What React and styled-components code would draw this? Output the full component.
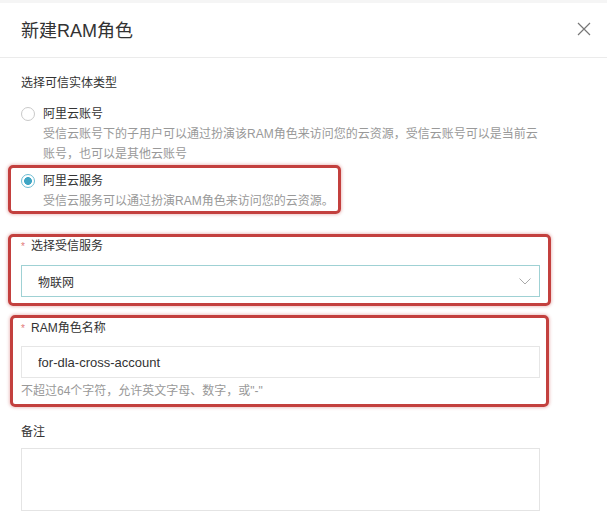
import React from 'react'
import styled, { createGlobalStyle } from 'styled-components'

const GlobalStyle = createGlobalStyle`
  html, body {
    margin: 0;
    padding: 0;
    background: #fff;
  }
  body {
    font-family: 'Liberation Sans', 'Noto Sans CJK SC', sans-serif;
    color: #333;
  }
`

export default function App() {
  return (
    <Dialog>
      <GlobalStyle />
      <Header>
        <Title>新建RAM角色</Title>
        <CloseButton aria-label="close">
          <svg width="14" height="14" viewBox="0 0 14 14">
            <path d="M1 1L13 13M13 1L1 13" stroke="#777" strokeWidth="1.2" fill="none" />
          </svg>
        </CloseButton>
      </Header>

      <Body>
        <SectionLabel>选择可信实体类型</SectionLabel>

        <Option>
          <Radio />
          <OptionText>
            <OptionTitle>阿里云账号</OptionTitle>
            <OptionDesc>
              受信云账号下的子用户可以通过扮演该RAM角色来访问您的云资源，受信云账号可以是当前云账号，也可以是其他云账号
            </OptionDesc>
          </OptionText>
        </Option>

        <OptionMark>
          <Option>
            <Radio checked />
            <OptionText>
              <OptionTitle>阿里云服务</OptionTitle>
              <OptionDesc>受信云服务可以通过扮演RAM角色来访问您的云资源。</OptionDesc>
            </OptionText>
          </Option>
        </OptionMark>

        <ServiceMark>
          <FieldLabel>
            <Required>*</Required>选择受信服务
          </FieldLabel>
          <Select>
            <span>物联网</span>
            <svg width="12" height="7" viewBox="0 0 12 7">
              <path d="M0.5 0.5L6 6L11.5 0.5" stroke="#aaa" strokeWidth="1" fill="none" />
            </svg>
          </Select>
        </ServiceMark>

        <NameMark>
          <FieldLabel>
            <Required>*</Required>RAM角色名称
          </FieldLabel>
          <TextInput readOnly value="for-dla-cross-account" />
          <Hint>不超过64个字符，允许英文字母、数字，或"-"</Hint>
        </NameMark>

        <NoteLabel>备注</NoteLabel>
        <NoteArea readOnly value="" />
      </Body>
    </Dialog>
  )
}

const Dialog = styled.div`
  width: 607px;
  height: 518px;
  overflow: hidden;
  background: #fff;
`

const Header = styled.div`
  box-sizing: border-box;
  height: 58px;
  display: flex;
  align-items: center;
  justify-content: space-between;
  padding: 0 16px 3px 21px;
  border-top: 3px solid #f5f5f5;
  border-bottom: 1px solid #ebebeb;
`

const Title = styled.div`
  font-size: 18px;
  color: #333;
`

const CloseButton = styled.div`
  width: 14px;
  height: 14px;
  display: flex;
`

const Body = styled.div`
  padding: 0 67px 0 21px;
  font-size: 12px;
`

const SectionLabel = styled.div`
  margin-top: 15px;
  line-height: 20px;
  color: #333;
`

const Option = styled.div`
  display: flex;
  align-items: flex-start;
  gap: 8px;
  margin-top: 11px;
`

const Radio = styled.span`
  box-sizing: border-box;
  flex: none;
  width: 14px;
  height: 14px;
  margin-top: 3px;
  border-radius: 50%;
  border: 1px solid ${(p) => (p.checked ? '#6dbdd3' : '#c9c9c9')};
  background: ${(p) =>
    p.checked ? 'radial-gradient(circle, #3fa5c4 0 3.6px, #fff 4.2px)' : '#fff'};
`

const OptionText = styled.div`
  max-width: 497px;
`

const OptionTitle = styled.div`
  line-height: 20px;
  color: #333;
`

const OptionDesc = styled.div`
  line-height: 20px;
  color: #999;
`

const Mark = styled.div`
  border: 3px solid #c3403e;
  border-radius: 5px;
  box-shadow: 0 0 3px 1px rgba(195, 64, 62, 0.3);
`

const OptionMark = styled(Mark)`
  width: fit-content;
  margin: 1px 0 0 -13px;
  padding: 3px 4px 0 10px;

  ${Option} {
    margin-top: 0;
  }
`

const ServiceMark = styled(Mark)`
  margin: 20px -11px 0 -13px;
  padding: 0 8px 6px 10px;
`

const NameMark = styled(Mark)`
  margin: 9px -9px 0 -11px;
  padding: 1px 6px 4px 8px;
`

const FieldLabel = styled.div`
  line-height: 18px;
  color: #333;
`

const Required = styled.span`
  display: inline-block;
  width: 10px;
  color: #e27b7b;
  font-size: 10px;
`

const fieldBox = `
  box-sizing: border-box;
  width: 100%;
  height: 32px;
  background: #fff;
  font-family: 'Liberation Sans', 'Noto Sans CJK SC', sans-serif;
  color: #333;
`

const Select = styled.div`
  ${fieldBox}
  margin-top: 9px;
  display: flex;
  align-items: center;
  justify-content: space-between;
  padding: 0 8px 0 16px;
  border: 1px solid #9fd1d4;
  font-size: 12px;
`

const TextInput = styled.input`
  ${fieldBox}
  display: block;
  margin-top: 8px;
  padding: 0 16px;
  border: 1px solid #e6e6e6;
  font-size: 13px;
  outline: none;
`

const Hint = styled.div`
  margin-top: 4px;
  line-height: 18px;
  color: #999;
`

const NoteLabel = styled.div`
  margin-top: 16px;
  line-height: 18px;
  color: #333;
`

const NoteArea = styled.textarea`
  ${fieldBox}
  display: block;
  height: 63px;
  margin-top: 7px;
  border: 1px solid #e4e4e4;
  resize: none;
  outline: none;
`
